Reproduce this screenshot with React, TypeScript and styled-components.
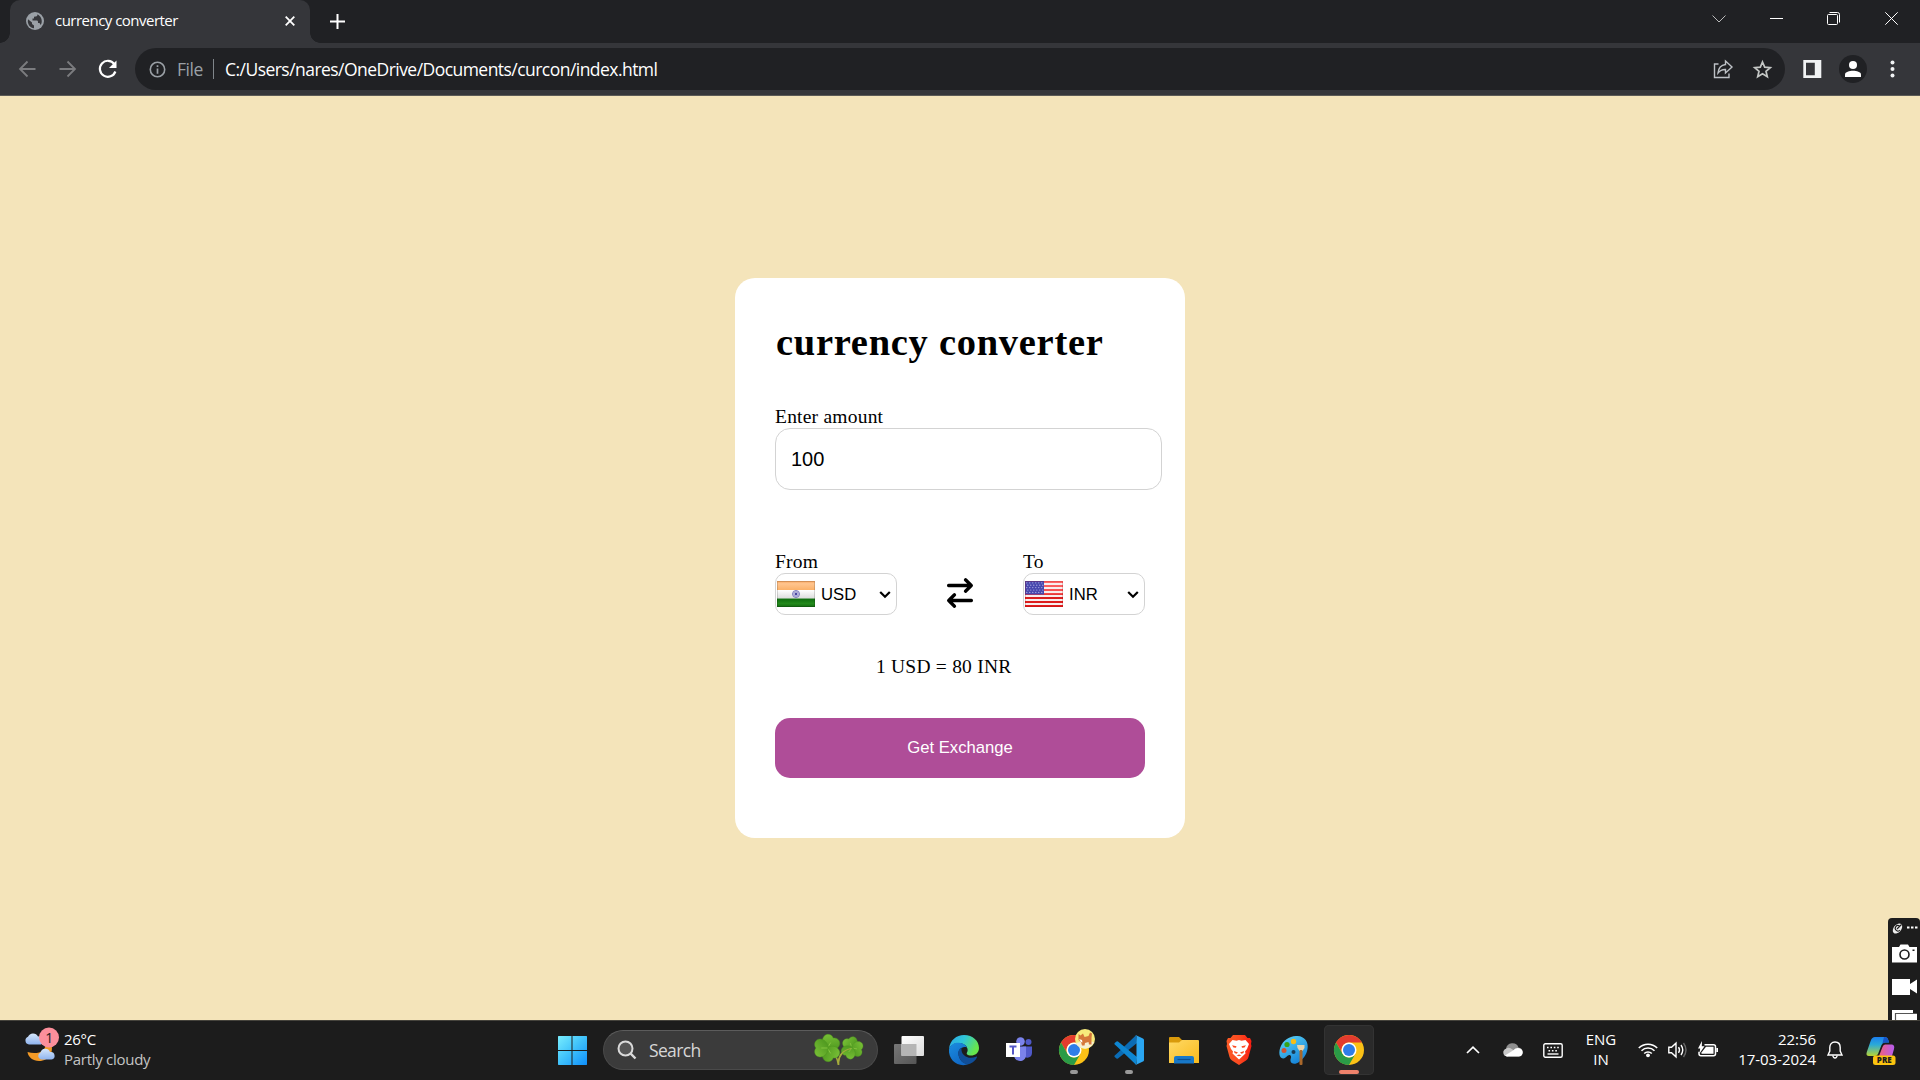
import React from "react";
import styled, { createGlobalStyle } from "styled-components";

const uiFont = `"Segoe UI", "Open Sans", "Noto Sans", sans-serif`;

const Global = createGlobalStyle`
  * { box-sizing: border-box; }
  html, body { margin: 0; padding: 0; background: #f4e4ba; overflow: hidden; }
  svg { display: block; flex: none; overflow: visible; }
`;

const Screen = styled.div`
  position: relative;
  display: flex;
  flex-direction: column;
  width: 1920px;
  height: 1080px;
  overflow: hidden;
  font-family: ${uiFont};
`;

/* ---------- browser chrome ---------- */
const TabStrip = styled.div`
  display: flex;
  align-items: flex-start;
  height: 43px;
  padding-left: 10px;
  background: #202124;
`;
const Tab = styled.div`
  position: relative;
  display: flex;
  align-items: center;
  width: 300px;
  height: 43px;
  padding: 0 14px 1px 16px;
  border-radius: 10px 10px 0 0;
  background: #35363a;
  color: #fff;
  &::before,
  &::after {
    content: "";
    position: absolute;
    bottom: 0;
    width: 10px;
    height: 10px;
  }
  &::before {
    left: -10px;
    background: radial-gradient(circle at 0 0, transparent 9.5px, #35363a 10px);
  }
  &::after {
    right: -10px;
    background: radial-gradient(circle at 100% 0, transparent 9.5px, #35363a 10px);
  }
`;
const TabTitle = styled.span`
  flex: 1;
  margin-left: 11px;
  padding-bottom: 2px;
  font-size: 15px;
  line-height: 20px;
  letter-spacing: -0.52px;
  white-space: nowrap;
`;
const NewTab = styled.div`
  margin-left: 19px;
  padding: 13px 0 0 0;
  flex: 1;
`;
const WindowButtons = styled.div`
  display: flex;
  height: 37px;
  align-items: center;
`;
const WindowButton = styled.div<{ $w: number }>`
  display: flex;
  justify-content: center;
  width: ${(p) => p.$w}px;
`;
const Toolbar = styled.div`
  display: flex;
  align-items: center;
  height: 53px;
  padding: 0 0 1px 16px;
  background: #35363a;
  border-bottom: 1px solid #5b5a56;
`;
const NavButtons = styled.div`
  display: flex;
  align-items: center;
  gap: 16px;
  width: 119px;
`;
const Omnibox = styled.div`
  display: flex;
  align-items: center;
  width: 1650px;
  height: 42px;
  padding: 0 12px 0 13px;
  border-radius: 21px;
  background: #202124;
`;
const Scheme = styled.span`
  margin-left: 11px;
  width: 36px;
  font-size: 17.5px;
  letter-spacing: -0.45px;
  line-height: 24px;
  color: #9aa0a6;
`;
const Bar = styled.span`
  width: 1px;
  height: 20px;
  background: #80868b;
`;
const Url = styled.span`
  flex: 1;
  margin-left: 11px;
  font-size: 17.5px;
  line-height: 24px;
  letter-spacing: -0.54px;
  color: #fff;
  white-space: nowrap;
`;
const OmniActions = styled.div`
  display: flex;
  align-items: center;
  gap: 20px;
`;
const ChromeActions = styled.div`
  display: flex;
  align-items: center;
  margin-left: 18px;
`;
const Avatar = styled.div`
  display: flex;
  align-items: center;
  justify-content: center;
  width: 28px;
  height: 28px;
  margin: 0 23px 0 18px;
  border-radius: 50%;
  background: #202124;
`;

/* ---------- page ---------- */
const Page = styled.main`
  flex: 1;
  display: flex;
  justify-content: center;
  align-items: flex-start;
  padding-top: 182px;
  background: #f4e4ba;
  font-family: "Liberation Serif", "Times New Roman", serif;
  font-size: 19.5px;
  letter-spacing: 0.22px;
  line-height: 23px;
  color: #000;
`;
const Card = styled.form`
  width: 450px;
  height: 560px;
  padding: 40px;
  border-radius: 20px;
  background: #fff;
`;
const Title = styled.h1`
  margin: 0 0 40px;
  padding: 1px 0 0 1px;
  font-size: 38.5px;
  letter-spacing: 0.72px;
  line-height: 46px;
`;
const Amount = styled.div`
  margin-bottom: 60px;
`;
const AmountInput = styled.input`
  display: block;
  width: 387px;
  height: 62px;
  padding: 0 15px;
  border: 1px solid lightgray;
  border-radius: 15px;
  outline: none;
  background: #fff;
  color: #000;
  font-family: "Liberation Sans", Arial, sans-serif;
  font-size: 20px;
`;
const Dropdowns = styled.div`
  display: flex;
  justify-content: space-between;
  margin-bottom: 40px;
`;
const Swap = styled.div`
  padding-top: 28px;
`;
const SelectBox = styled.div`
  display: flex;
  align-items: center;
  width: 122px;
  height: 42px;
  padding: 0 5px 0 1px;
  border: 1px solid lightgray;
  border-radius: 10px;
  font-family: "Liberation Sans", Arial, sans-serif;
  font-size: 16.67px;
  letter-spacing: 0;
  line-height: 20px;
`;
const Code = styled.span`
  flex: 1;
  margin-left: 6px;
  padding-top: 2px;
`;
const Message = styled.div`
  margin: 0 0 40px 101px;
`;
const Submit = styled.button`
  display: block;
  width: 370px;
  height: 60px;
  padding: 0;
  border: 0;
  border-radius: 15px;
  background: #af4d98;
  color: #fff;
  font-family: "Liberation Sans", Arial, sans-serif;
  font-size: 16.67px;
`;

/* ---------- capture widget ---------- */
const Capture = styled.div`
  position: absolute;
  right: 0;
  top: 918px;
  width: 32px;
  height: 102px;
  overflow: hidden;
  border-radius: 4px 4px 0 0;
  background: #1d1d1d;
`;

/* ---------- taskbar ---------- */
const Taskbar = styled.footer`
  display: grid;
  grid-template-columns: 547px 832px 1fr;
  height: 60px;
  padding-bottom: 1px;
  background: #1c1c1c;
  border-top: 1px solid #45433c;
  color: #fff;
  font-size: 15px;
  line-height: 20px;
`;
const Weather = styled.div`
  display: flex;
  align-items: flex-start;
  padding: 6px 0 0 24px;
  gap: 9px;
`;
const Lines = styled.div<{ $align?: string; $tight?: number }>`
  display: flex;
  flex-direction: column;
  padding-bottom: 2px;
  text-align: ${(p) => p.$align || "left"};
  letter-spacing: ${(p) => p.$tight || 0}px;
  white-space: nowrap;
`;
const Forecast = styled(Lines)`
  padding-top: 2px;
`;
const Dim = styled.span`
  color: #c4c4c4;
`;
const Apps = styled.div`
  display: flex;
  align-items: center;
`;
const AppSlot = styled.div<{ $active?: boolean; $mark?: string }>`
  position: relative;
  display: flex;
  align-items: center;
  justify-content: center;
  width: 50px;
  height: 50px;
  margin-right: 5px;
  border-radius: 5px;
  background: ${(p) => (p.$active ? "#2a2a2a" : "none")};
  box-shadow: ${(p) => (p.$active ? "inset 0 0 0 1px #333" : "none")};
  &::after {
    content: "";
    position: absolute;
    bottom: 1px;
    width: ${(p) => (p.$active ? 20 : 8)}px;
    height: 4px;
    border-radius: 2px;
    background: ${(p) => p.$mark || "transparent"};
  }
`;
const SearchPill = styled.div`
  display: flex;
  align-items: center;
  width: 275px;
  height: 40px;
  margin: 0 6px 0 1px;
  padding: 0 13px 0 13px;
  border: 1px solid #4a4a4a;
  border-top-color: #5c5c5c;
  border-radius: 20px;
  background: #3b3b3b;
`;
const SearchText = styled.span`
  flex: 1;
  margin-left: 12px;
  font-size: 17.5px;
  line-height: 24px;
  letter-spacing: -0.65px;
  color: #d6d6d6;
`;
const Tray = styled.div`
  display: flex;
  align-items: center;
  padding-left: 87px;
`;
const Spacer = styled.span<{ $w: number }>`
  flex: none;
  width: ${(p) => p.$w}px;
`;
const Fixed = styled.div<{ $w: number }>`
  flex: none;
  width: ${(p) => p.$w}px;
`;

const line = (color: string, w: number) => ({
  fill: "none",
  stroke: color,
  strokeWidth: w,
});

const Globe = () => (
  <svg width="18" height="18" viewBox="0 0 18 18">
    <circle cx="9" cy="9" r="9" fill="#9aa0a6" />
    <path d="M2 7.200 L6 10.500 V12 L8 13.500 V16.200 C4.200 15.700 2 12.800 1.800 9.500 Z M11.500 2.300 C11.500 4.500 10.500 4.500 8 4.800 V6.500 H6.500 V8.600 H11 C12 8.600 12 9.500 12 11 H13.500 L14.700 13 C16.500 10.800 16.500 5 11.500 2.300 Z" fill="#35363a" />
  </svg>
);

const IndiaFlag = () => (
  <svg width="38" height="26" viewBox="0 0 38 26">
    <defs>
      <linearGradient id="saf" x2="0" y2="1"><stop stopColor="#f9a45c" /><stop offset=".3" stopColor="#ffc58f" /><stop offset="1" stopColor="#fbb169" /></linearGradient>
      <linearGradient id="wht" x2="0" y2="1"><stop stopColor="#fff" /><stop offset="1" stopColor="#dcdcdc" /></linearGradient>
      <linearGradient id="grn" x2="0" y2="1"><stop stopColor="#0e6b0e" /><stop offset=".6" stopColor="#238a1b" /><stop offset="1" stopColor="#136a10" /></linearGradient>
    </defs>
    <rect width="38" height="9" fill="url(#saf)" />
    <rect y="9" width="38" height="8.500" fill="url(#wht)" />
    <rect y="17.500" width="38" height="8.500" fill="url(#grn)" />
    <circle cx="19" cy="13" r="3.500" fill="#c9c9e6" stroke="#7d7dc0" strokeWidth="1" />
    <path d="M19 9.500V16.500M15.500 13H22.500M16.500 10.500L21.500 15.500M21.500 10.500L16.500 15.500" stroke="#8c8cc8" strokeWidth=".6" />
    <circle cx="19" cy="13" r="1.200" fill="#4646a0" />
    <rect x=".5" y=".5" width="37" height="25" fill="none" stroke="#000" strokeOpacity=".15" />
  </svg>
);

const UsFlag = () => {
  const stripes = Array.from({ length: 13 }, (_, i) => i);
  const stars = Array.from({ length: 30 }, (_, i) => [1.8 + (i % 6) * 3 + (Math.floor(i / 6) % 2), 1.8 + Math.floor(i / 6) * 2.4]);
  return (
    <svg width="38" height="26" viewBox="0 0 38 26">
      <defs>
        <linearGradient id="red" gradientUnits="userSpaceOnUse" x1="0" y1="0" x2="0" y2="26"><stop stopColor="#ff6a6a" /><stop offset=".5" stopColor="#f24949" /><stop offset=".55" stopColor="#d82020" /><stop offset="1" stopColor="#e01b1b" /></linearGradient>
      </defs>
      <rect width="38" height="26" fill="#f7eeee" />
      {stripes.map((i) => i % 2 === 0 && <rect key={i} y={i * 2} width="38" height="2" fill="url(#red)" />)}
      <rect width="19" height="13.500" fill="#4747ae" />
      {stars.map(([x, y], i) => <circle key={i} cx={x} cy={y} r=".6" fill="#b9b9e6" />)}
      <rect x=".5" y=".5" width="37" height="25" fill="none" stroke="#900" strokeOpacity=".22" />
    </svg>
  );
};

const Chevron = () => (
  <svg width="12" height="8" viewBox="0 0 12 8">
    <path d="M1.200 2 L6 6.800 L10.800 2" {...line("#000", 2.2)} />
  </svg>
);

const ChromeLogo = ({ pin }: { pin?: boolean }) => (
  <svg width="30" height="30" viewBox="0 0 30 30">
    <circle cx="15" cy="15" r="15" fill="#fbc116" />
    <path d="M2 7.500 A15 15 0 0 1 28 7.500 H15 A7.500 7.500 0 0 0 8.500 18.750 Z" fill="#e33b2e" />
    <path d="M2 7.500 A15 15 0 0 0 15 30 L21.500 18.750 A7.500 7.500 0 0 1 8.500 18.750 Z" fill="#2a9b47" />
    <circle cx="15" cy="15" r="7.500" fill="#fff" />
    <circle cx="15" cy="15" r="6" fill="#2f7de9" />
    {pin && (
      <g>
        <circle cx="26" cy="4" r="10" fill="#f7ea7c" />
        <path d="M17 8 Q26 5 35 7 A10 10 0 0 1 18.500 10.500 Z" fill="#f6efd2" />
        <path d="M19.500 -1 L21.500 .5 L24 -1.500 L25.500 2 L29.500 1 L31 -2.500 L33 -1.500 L32.500 3 V9.500 H30 L29.500 7 L26 8 L25.500 10.500 H23 L22 7 L19.500 5 Z" fill="#d5773a" />
        <path d="M20 4 L23 5 L23.500 7.500 L22 7 Z" fill="#fff" />
      </g>
    )}
  </svg>
);

const Start = () => (
  <svg width="30" height="30" viewBox="0 0 30 30">
    <defs><linearGradient id="win" gradientUnits="userSpaceOnUse" x1="0" y1="0" x2="29" y2="29"><stop stopColor="#7df0fd" /><stop offset=".5" stopColor="#42c4fb" /><stop offset="1" stopColor="#1292fb" /></linearGradient></defs>
    <path d="M1.500 1H14.500V15H1V1.500Z M15.500 1H29.500L30 1.500V15H15.500Z M1 16H14.500V30H1.500L1 29.500Z M15.500 16H30V29.500L29.500 30H15.500Z" fill="url(#win)" />
  </svg>
);

const Leaf = ({ x, y, s, r }: { x: number; y: number; s: number; r: number }) => (
  <g transform={`translate(${x} ${y}) rotate(${r}) scale(${s})`}>
    {[0, 120, 240].map((a) => (
      <g key={a} transform={`rotate(${a})`}>
        <path d="M0 1 C-6 0 -9.500 -4 -8.500 -8.500 C-7.500 -12.500 -2.500 -13.500 0 -11 C2.500 -13.500 7.500 -12.500 8.500 -8.500 C9.500 -4 6 0 0 1Z" fill="url(#leaf)" stroke="#4c951d" strokeWidth=".4" />
        <path d="M0 0 V-6" stroke="#92cf48" strokeWidth=".7" />
      </g>
    ))}
  </g>
);
const Clover = () => (
  <svg width="50" height="32" viewBox="0 0 50 32">
    <defs><linearGradient id="leaf" x2="1" y2="1"><stop stopColor="#7cc338" /><stop offset="1" stopColor="#47911b" /></linearGradient></defs>
    <path d="M15 13 C20 18 23.500 23 24.500 31 M24.500 31 C24 22 28 16.500 38 14" {...line("#a5ab3c", 1.6)} />
    <Leaf x={13.5} y={14} s={1.04} r={30} />
    <Leaf x={38} y={14} s={0.86} r={-20} />
    <path d="M24.500 31 C24 22 28 16.500 37 14.500" {...line("#a5ab3c", 1.2)} />
  </svg>
);

const TaskView = () => (
  <svg width="30" height="30" viewBox="0 0 30 30">
    <defs>
      <linearGradient id="tv1" x2="1" y2="1"><stop stopColor="#fff" /><stop offset="1" stopColor="#dcdcdc" /></linearGradient>
      <linearGradient id="tv2" x2="1" y2="1"><stop stopColor="#777" /><stop offset="1" stopColor="#555" /></linearGradient>
    </defs>
    <rect y="9" width="22.500" height="20" rx="1" fill="url(#tv2)" />
    <rect x="7.500" y="1" width="22.500" height="20" rx="1" fill="url(#tv1)" />
    <rect x="7.500" y="9" width="15" height="12" fill="#b5b5b5" />
  </svg>
);

const Edge = () => (
  <svg width="30" height="30" viewBox="0 0 30 30">
    <defs>
      <linearGradient id="e1" x2="1" y2=".4"><stop stopColor="#2ba5e8" /><stop offset=".5" stopColor="#2fc6d8" /><stop offset="1" stopColor="#67e64c" /></linearGradient>
      <linearGradient id="e2" x2=".6" y2="1"><stop stopColor="#1b8de0" /><stop offset="1" stopColor="#1067c4" /></linearGradient>
    </defs>
    <path d="M0 14 C1 5 7.500 0 15 0 C24 0 30 6 30 13 C30 18 26 20.500 22 20.500 C18.500 20.500 17 19 18 17.500 C20 15 18 8 9.500 8 C4.500 8 1.500 11 0 14Z" fill="url(#e1)" />
    <path d="M0 14 C2 9 6 7.500 10 7.800 C14 8 17 10 18 12.500 C13 10.500 9 15 9.500 19 C10 25 15 29.500 20 29 C10 33 -1 26 0 14Z" fill="url(#e2)" />
    <path d="M12.500 12.800 C9 14 8.500 19 10 22 C12.500 28.500 18 30 21.500 28.500 C24 27.500 27 25 28 22.300 C28.300 21.500 27.700 21.300 27 21.700 C20 25 11.500 21 12.500 12.800Z" fill="#104e98" />
  </svg>
);

const Teams = () => (
  <svg width="28" height="26" viewBox="0 0 28 26">
    <circle cx="15.500" cy="4.500" r="4.300" fill="#7b83eb" />
    <circle cx="23.500" cy="5" r="3" fill="#5059c9" />
    <path d="M18 9.500H27V16 C27 22 19 22 18 17Z" fill="#5059c9" />
    <path d="M9 9.500H21V18 C21 26 9 26 9 18Z" fill="#7b83eb" />
    <rect x="1" y="6" width="14" height="14" fill="#fff" />
    <path d="M4.500 9.500H11.500M8 9.500V17.500" {...line("#5558c8", 2)} />
  </svg>
);

const VsCode = () => (
  <svg width="30" height="30" viewBox="0 0 30 30">
    <path d="M22 .3 L3.500 18 L.7 20.500 Q0 21.200 .7 22 L2.500 23.500 Q3.200 24 4 23.500 L23 8Z" fill="#0b6cb5" />
    <path d="M22 29.700 L3.500 12 L.7 9.500 Q0 8.800 .7 8 L2.500 6.500 Q3.200 6 4 6.500 L23 22Z" fill="#0e86d2" />
    <path d="M21.500 30 L22.500 28.500 V1.500 L21.500 0 L29 3.500 Q30 4 30 5 V25 Q30 26 29 26.500Z" fill="#2aa6f2" />
  </svg>
);

const Folder = () => (
  <svg width="30" height="28" viewBox="0 0 30 28">
    <defs><linearGradient id="fo" x2="1" y2="1"><stop stopColor="#ffd965" /><stop offset="1" stopColor="#f8ba1d" /></linearGradient></defs>
    <path d="M0 2 Q0 1 1 1 H10 L13 4 H28 V8 H0Z" fill="#d99a0b" />
    <path d="M0 6.500 H10 L13 4 H29 Q30 4 30 5 V27 H0Z" fill="url(#fo)" />
    <path d="M5 27.500 V22 Q5 20 7 20 H23 Q25 20 25 22 V27.500Z" fill="#1878c8" />
    <path d="M8.500 23.500H21.500" {...line("#0b4f92", 1.2)} />
  </svg>
);

const Brave = () => (
  <svg width="26" height="30" viewBox="0 0 26 30">
    <defs><linearGradient id="br"><stop stopColor="#fb5a26" /><stop offset=".5" stopColor="#fb4a20" /><stop offset="1" stopColor="#f91d12" /></linearGradient></defs>
    <path d="M7 0 H19 L21.500 3 L24 3 L25.500 6 L25 9 L25.500 11 L22.500 22 Q22 24 20 25.500 L13 30 L6 25.500 Q4 24 3.500 22 L.5 11 L1 9 L.5 6 L2 3 L4.500 3Z" fill="url(#br)" />
    <path d="M6.500 5 L10.500 5.800 L13 5 L15.500 5.800 L19.500 5 L23 9 L21 14 L19 16.500 L19.500 18.500 L13 24.500 L6.500 18.500 L7 16.500 L5 14 L3 9Z" fill="#fff" />
    <path d="M6 10.200 L10.500 11.300 L10 12.800 L7.500 12.500 Z M20 10.200 L15.500 11.300 L16 12.800 L18.500 12.500Z M8 16 L12 17.500 L10.500 18.700 L8.500 18Z M18 16 L14 17.500 L15.500 18.700 L17.500 18Z M10.500 20.500 L13 19.500 L15.500 20.500 L13 21.300Z" fill="#fb4a22" />
  </svg>
);

const Paint = () => (
  <svg width="30" height="30" viewBox="0 0 30 30">
    <defs><linearGradient id="pa" x2=".6" y2="1"><stop stopColor="#5fd8f8" /><stop offset="1" stopColor="#1684d8" /></linearGradient></defs>
    <path d="M17 1 C25 0 30 7 28.500 14 C27.500 20 24 24 20 27 C17 29.500 12 29.500 11.500 26 C11.200 23.500 13 22 11.500 20.500 C9 18.500 7 24 4 23.500 C0 23 -.5 17 1.500 12 C4 5.500 10 1.500 17 1Z" fill="url(#pa)" />
    <circle cx="14.500" cy="6.500" r="2.700" fill="#f7bd16" />
    <circle cx="8" cy="9.500" r="2.600" fill="#37a318" />
    <circle cx="5" cy="15.500" r="2.500" fill="#d35230" />
    <circle cx="14.500" cy="17" r="2" fill="#173b56" />
    <path d="M18 10 H25.500 V13 L23.500 16 H20.500 L18.500 13Z" fill="#e7d4ad" />
    <rect x="20.500" y="15" width="3" height="15" rx="1" fill="#a9682b" />
  </svg>
);

const apps = [
  { node: <TaskView /> },
  { node: <Edge /> },
  { node: <Teams /> },
  { node: <ChromeLogo pin />, mark: "#999" },
  { node: <VsCode />, mark: "#999" },
  { node: <Folder /> },
  { node: <Brave /> },
  { node: <Paint /> },
  { node: <ChromeLogo />, mark: "#ee826b", active: true },
];

export default function App() {
  return (
    <Screen>
      <Global />
      <TabStrip>
        <Tab>
          <Globe />
          <TabTitle>currency converter</TabTitle>
          <svg width="12" height="12" viewBox="0 0 12 12"><path d="M1.700 1.700L10.300 10.300M10.300 1.700L1.700 10.300" {...line("#fff", 1.8)} /></svg>
        </Tab>
        <NewTab>
          <svg width="16" height="16" viewBox="0 0 16 16"><path d="M8.500 1V16M1 8.500H16" {...line("#fff", 2)} /></svg>
        </NewTab>
        <WindowButtons>
          <WindowButton $w={58}><svg width="14" height="8" viewBox="0 0 14 8"><path d="M.5 .5L7 7L13.500 .5" {...line("#bbb", 1)} /></svg></WindowButton>
          <WindowButton $w={57}><svg width="13" height="1" viewBox="0 0 13 1"><path d="M0 .5H13" {...line("#fff", 1)} /></svg></WindowButton>
          <WindowButton $w={57}><svg width="13" height="13" viewBox="0 0 13 13"><rect x=".5" y="2.500" width="10" height="10" rx="1" {...line("#fff", 1)} /><path d="M2.500 .5H10.500Q12.500 .5 12.500 2.500V10.500" {...line("#fff", 1)} /></svg></WindowButton>
          <WindowButton $w={58}><svg width="13" height="13" viewBox="0 0 13 13"><path d="M.3 .3L12.700 12.700M12.700 .3L.3 12.700" {...line("#fff", 1)} /></svg></WindowButton>
        </WindowButtons>
      </TabStrip>
      <Toolbar>
        <NavButtons>
          <svg width="24" height="24" viewBox="0 0 24 24"><path d="M19.500 12H4.500M11.500 4.500L4 12L11.500 19.500" {...line("#7b7c7f", 1.8)} /></svg>
          <svg width="24" height="24" viewBox="0 0 24 24"><path d="M3.500 12H18.500M11.500 4.500L19 12L11.500 19.500" {...line("#7b7c7f", 1.8)} /></svg>
          <svg width="24" height="24" viewBox="0 0 24 24"><path d="M18.300 7A8 8 0 1 0 19.400 14.500" {...line("#fff", 2.2)} /><path d="M20.500 3.500V11H13Z" fill="#fff" /></svg>
        </NavButtons>
        <Omnibox>
          <svg width="18" height="18" viewBox="0 0 18 18"><circle cx="9.500" cy="9.500" r="7.200" {...line("#9aa0a6", 1.6)} /><path d="M9.500 8.500V13.700M9.500 5.300V7" {...line("#9aa0a6", 1.7)} /></svg>
          <Scheme>File</Scheme>
          <Bar />
          <Url>C:/Users/nares/OneDrive/Documents/curcon/index.html</Url>
          <OmniActions>
            <svg width="20" height="20" viewBox="0 0 20 20"><path d="M5.500 5H1.500V18.500H16V14.500" {...line("#bdc1c6", 1.4)} /><path d="M12.500 2L19 8L12.500 14V10.500C9 10.300 7 11.500 5 14C5.500 9 8 6 12.500 5.500Z" {...line("#bdc1c6", 1.4)} /></svg>
            <svg width="20" height="20" viewBox="0 0 20 20"><path d="M9.500 3L11.700 8.100L17.300 8.600L13 12.300L14.300 17.700L9.500 14.800L4.700 17.700L6 12.300L1.700 8.600L7.300 8.100Z" {...line("#c4c7c5", 1.7)} /></svg>
          </OmniActions>
        </Omnibox>
        <ChromeActions>
          <svg width="18" height="18" viewBox="0 0 18 18"><path d="M.3 0H18.300V18H.3ZM3 2.800V15.200H11.800V2.800Z" fill="#f1f3f4" fillRule="evenodd" /></svg>
          <Avatar><svg width="16" height="16" viewBox="0 0 16 16"><circle cx="8" cy="4" r="4" fill="#fff" /><path d="M0 16V13.500C0 11 4.500 9.800 8 9.800S16 11 16 13.500V16Z" fill="#fff" /></svg></Avatar>
          <svg width="4" height="18" viewBox="0 0 4 18"><circle cx="2.500" cy="2.500" r="2" fill="#f1f3f4" /><circle cx="2.500" cy="9" r="2" fill="#f1f3f4" /><circle cx="2.500" cy="15.500" r="2" fill="#f1f3f4" /></svg>
        </ChromeActions>
      </Toolbar>

      <Page>
        <Card>
          <Title>currency converter</Title>
          <Amount>
            <div>Enter amount</div>
            <AmountInput type="text" defaultValue="100" />
          </Amount>
          <Dropdowns>
            <div>
              <div>From</div>
              <SelectBox><IndiaFlag /><Code>USD</Code><Chevron /></SelectBox>
            </div>
            <Swap>
              <svg width="26" height="30" viewBox="0 0 26 30"><g fill="none" stroke="#000" strokeWidth="3.300" strokeLinecap="round" strokeLinejoin="round"><path d="M1.600 7.500H23.500M18.500 1.800L24.300 7.500L18.500 13.200" /><path d="M24.400 22.500H2.500M7.500 16.800L1.700 22.500L7.500 28.200" /></g></svg>
            </Swap>
            <div>
              <div>To</div>
              <SelectBox><UsFlag /><Code>INR</Code><Chevron /></SelectBox>
            </div>
          </Dropdowns>
          <Message>1 USD = 80 INR</Message>
          <Submit type="button">Get Exchange</Submit>
        </Card>
      </Page>

      <Taskbar>
        <Weather>
          <svg width="31" height="36" viewBox="0 0 31 36">
            <defs><linearGradient id="cl" x2="0" y2="1"><stop stopColor="#d5e6fb" /><stop offset="1" stopColor="#8fb4ee" /></linearGradient></defs>
            <path d="M27 16 C30 24 26 34 15 34 C9 34 4 30 3.500 25 C13 28 23 25 22 14Z" fill="#f39a26" />
            <path d="M5 17.500 A4 4 0 0 1 4 9.800 A5.500 5.500 0 0 1 14 9.500 A4 4 0 0 1 17 17.500Z" fill="url(#cl)" />
            <path d="M17 32.500 A3.700 3.700 0 0 1 16.500 25.500 A5 5 0 0 1 26 25 A3.800 3.800 0 0 1 27.500 32.500Z" fill="url(#cl)" />
            <circle cx="25" cy="10.500" r="10" fill="#fc8f9b" />
            <text x="25.200" y="15.500" textAnchor="middle" fontSize="14" fontFamily={uiFont} fill="#1c1c1c">1</text>
          </svg>
          <Forecast $tight={-0.28}><span>26°C</span><Dim>Partly cloudy</Dim></Forecast>
        </Weather>
        <Apps>
          <AppSlot><Start /></AppSlot>
          <SearchPill>
            <svg width="20" height="20" viewBox="0 0 20 20"><circle cx="8.500" cy="8.500" r="7" fill="#555" stroke="#dadada" strokeWidth="2" /><path d="M13.700 13.700L18.500 18.500" {...line("#dadada", 2.4)} /></svg>
            <SearchText>Search</SearchText>
            <Clover />
          </SearchPill>
          {apps.map((a, i) => (
            <AppSlot key={i} $active={a.active} $mark={a.mark}>{a.node}</AppSlot>
          ))}
        </Apps>
        <Tray>
          <svg width="14" height="8" viewBox="0 0 14 8"><path d="M1 7L7 1.200L13 7" {...line("#fff", 1.7)} /></svg>
          <Spacer $w={23} />
          <svg width="20" height="14" viewBox="0 0 20 14"><path d="M4 13.500A4 4 0 0 1 3 5.800A6.500 6.500 0 0 1 15.500 4.500A4.600 4.600 0 0 1 16 13.500Z" fill="#8e8e8e" /><path d="M4 13.500A4 4 0 0 1 3 5.800Q6 3.500 9.500 6.500L15 10Z" fill="#c8c8c8" /><path d="M2 12.500L10 7.500Q14 3.500 18 6Q20.500 8 19.500 11Q18.500 13.500 16 13.500H4Z" fill="#fff" /></svg>
          <Spacer $w={20} />
          <svg width="20" height="15" viewBox="0 0 20 15"><rect x=".8" y=".8" width="18.400" height="13.400" rx="1.500" {...line("#fff", 1.4)} /><path d="M4 4.500H16" {...line("#fff", 1.6)} strokeDasharray="1.600 1.800" /><path d="M5.500 7.700H15" {...line("#fff", 1.6)} strokeDasharray="1.600 1.800" /><path d="M4.500 11H15.500" {...line("#fff", 1.4)} /></svg>
          <Spacer $w={18} />
          <Fixed $w={40}><Lines $align="center"><span>ENG</span><span>IN</span></Lines></Fixed>
          <Spacer $w={17} />
          <svg width="20" height="16" viewBox="0 0 20 16"><g {...line("#fff", 1.6)}><path d="M.8 6A13 13 0 0 1 19.200 6" /><path d="M3.500 8.700A9.200 9.200 0 0 1 16.500 8.700" /><path d="M6.200 11.500A5.400 5.400 0 0 1 13.800 11.500" /></g><circle cx="10" cy="13.300" r="1.900" fill="#fff" /></svg>
          <Spacer $w={10} />
          <svg width="20" height="16" viewBox="0 0 20 16"><path d="M.8 5.300H3.500L8 1.200V14.800L3.500 10.700H.8Z" {...line("#fff", 1.4)} /><path d="M10.500 5.200Q12.500 8 10.500 10.800M13 3Q16.500 8 13 13" {...line("#fff", 1.4)} /><path d="M15.500 1Q20.500 8 15.500 15" {...line("#666", 1.4)} /></svg>
          <Spacer $w={10} />
          <svg width="20" height="16" viewBox="0 0 20 16"><path d="M6.500 2.700H15.500Q17.500 2.700 17.500 4.700V11.700Q17.500 13.700 15.500 13.700H3Q1 13.700 1 11.700V9.700" {...line("#fff", 1.5)} /><path d="M8 4.700H15.500V11.700H3.500L3.500 10.500Z" fill="#fff" /><path d="M18.300 6H20V10H18.300Z" fill="#fff" /><path d="M4 -1L0 6.500H2.200L1.500 11.500L6.500 4.200H3.800Z" fill="#fff" /></svg>
          <Spacer $w={8} />
          <Fixed $w={90}><Lines $align="right" $tight={-0.05}><span>22:56</span><span>17-03-2024</span></Lines></Fixed>
          <Spacer $w={11} />
          <svg width="16" height="18" viewBox="0 0 16 18"><path d="M8 1C4.500 1 2.800 3.500 2.800 6.500V10L1 14H15L13.200 10V6.500C13.200 3.500 11.500 1 8 1Z" {...line("#fff", 1.4)} /><path d="M5.800 14.500Q6.200 17 8 17T10.200 14.500" {...line("#fff", 1.4)} /></svg>
          <Spacer $w={23} />
          <svg width="30" height="29" viewBox="0 0 30 29">
            <defs>
              <linearGradient id="c1" x2="0" y2="1"><stop stopColor="#1c7ff0" /><stop offset=".4" stopColor="#2aa9d8" /><stop offset="1" stopColor="#b7d433" /></linearGradient>
              <linearGradient id="c2" x2="1" y2="0"><stop stopColor="#f0617b" /><stop offset="1" stopColor="#b65cf0" /></linearGradient>
            </defs>
            <path d="M9 1H19Q21.500 1 22.300 4L23 6.500H19Q16.500 6.500 15.500 9L12 18Q11 20 9 20H3Q-.5 20 .8 16L4.800 4.500Q6 1 9 1Z" fill="url(#c1)" />
            <path d="M18 1Q21.500 1 22.300 4L23 6.500H19Q17.200 6.500 16.300 8Z" fill="#1655c8" />
            <path d="M19 8.500H26Q29 9 28 13L26 20H13L16.500 11Q17.300 8.500 19 8.500Z" fill="url(#c2)" />
            <rect x="7" y="19.500" width="22.500" height="9.500" rx="2.500" fill="#fbc30f" />
            <text x="18.300" y="27" textAnchor="middle" fontSize="8" fontWeight="800" fontFamily={uiFont} fill="#1c1c1c">PRE</text>
          </svg>
        </Tray>
      </Taskbar>

      <Capture>
        <svg width="32" height="102" viewBox="0 0 32 102">
          <ellipse cx="9.500" cy="10.500" rx="5.800" ry="3.800" transform="rotate(-50 9.500 10.500)" fill="#eee" />
          <path d="M11.500 8A2.700 2.700 0 1 0 12 12M9 11L13.500 6.500" {...line("#1d1d1d", 1.1)} />
          <path d="M19 9.500H21.500M23 9.500H25.500M27 9.500H29.500" {...line("#fff", 2)} />
          <path d="M4 29H11L12.500 26.500H20L21.500 29H29V44.500H4Z" fill="#fff" />
          <circle cx="16.500" cy="36.500" r="4.500" {...line("#1d1d1d", 1.6)} />
          <rect x="24.500" y="31.500" width="2" height="1.500" fill="#1d1d1d" />
          <path d="M4 61H22V66L29 61.500V75.500L22 71V77H4Z" fill="#fff" />
          <path d="M4 92H25V95H29V102H4Z" fill="#fff" />
          <path d="M7.500 102V95.500H29" {...line("#555", 1.2)} />
        </svg>
      </Capture>
    </Screen>
  );
}
